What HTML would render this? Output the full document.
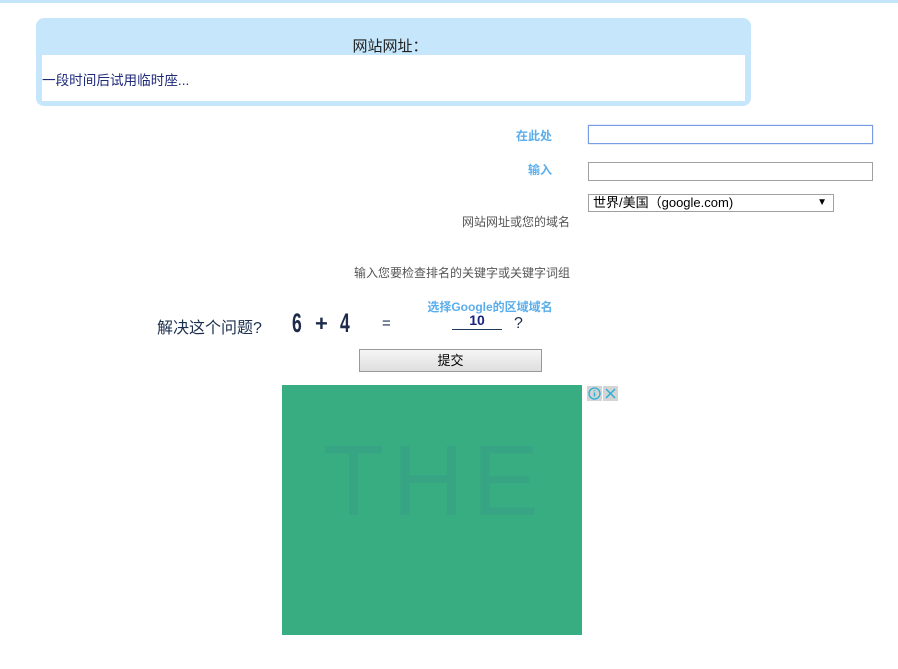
<!DOCTYPE html>
<html><head><meta charset="utf-8"><style>
body{margin:0;width:898px;height:669px;position:relative;background:#fff;font-family:"Liberation Sans","Noto Sans CJK SC",sans-serif;overflow:hidden}
.a{position:absolute;white-space:nowrap}
.lbl{color:#5aaeec;font-weight:bold;font-size:12px;text-align:right}
.hint{color:#555;font-size:12px;text-align:right}
</style></head><body>
<div class="a" style="left:0;top:0;width:898px;height:3px;background:#c5e5fb"></div>
<div class="a" style="left:36px;top:18px;width:715px;height:88px;background:#c5e6fb;border-radius:8px"></div>
<div class="a" style="left:42px;top:55px;width:703px;height:46px;background:#fff"></div>
<div class="a" style="left:0;width:780px;top:35px;text-align:center;font-size:15px;color:#222">网站网址：</div>
<div class="a" style="left:42px;top:69px;font-size:13.6px;color:#1f2a7a">一段时间后试用临时座...</div>

<div class="a lbl" style="right:346px;top:127px">在此处</div>
<div class="a" style="left:588px;top:125px;width:285px;height:19px;box-sizing:border-box;border:1px solid #7a9de6;box-shadow:0 0 1px #7a9de6"></div>
<div class="a lbl" style="right:346px;top:161px">输入</div>
<div class="a" style="left:588px;top:162px;width:285px;height:19px;box-sizing:border-box;border:1px solid #a0a0a0"></div>
<div class="a" style="left:588px;top:194px;width:246px;height:18px;box-sizing:border-box;border:1px solid #a0a0a0;font-size:13px;color:#000;line-height:16px;padding-left:4px">世界/美国（google.com)<span style="position:absolute;right:6px;top:0;font-size:10px">▼</span></div>
<div class="a hint" style="right:328px;top:213px">网站网址或您的域名</div>
<div class="a hint" style="right:328px;top:264px">输入您要检查排名的关键字或关键字词组</div>
<div class="a lbl" style="left:400px;width:180px;text-align:center;top:298px">选择Google的区域域名</div>

<div class="a" style="left:157px;top:314px;font-size:16px;color:#1d2f4f">解决这个问题?</div>
<div class="a" style="left:292px;top:308px;font-size:27px;font-weight:bold;color:#1d2a4a;transform:scaleX(0.65);transform-origin:left">6</div>
<div class="a" style="left:315px;top:311px;font-size:22px;font-weight:bold;color:#1d2a4a">+</div>
<div class="a" style="left:340px;top:308px;font-size:27px;font-weight:bold;color:#1d2a4a;transform:scaleX(0.65);transform-origin:left">4</div>
<div class="a" style="left:382px;top:315px;font-size:15px;color:#1d2f4f">=</div>
<div class="a" style="left:452px;top:312px;width:50px;text-align:center;font-size:14px;font-weight:bold;color:#1a237e">10</div>
<div class="a" style="left:452px;top:329px;width:50px;height:1px;background:#1d3a5a"></div>
<div class="a" style="left:514px;top:315px;font-size:16px;color:#1d2f4f">?</div>
<div class="a" style="left:359px;top:349px;width:183px;height:23px;box-sizing:border-box;border:1px solid #999;background:linear-gradient(#f6f6f6,#dedede);font-size:13px;text-align:center;line-height:21px;color:#000">提交</div>

<div class="a" style="left:282px;top:385px;width:300px;height:250px;background:#38ad82;overflow:hidden">
<div class="a" style="left:41px;top:31px;font-size:100px;line-height:130px;color:#37a584;font-family:'Liberation Sans',sans-serif;letter-spacing:8px">THE</div>
</div>
<div class="a" style="left:587px;top:386px;width:15px;height:15px;background:#d4d4d4"><svg width="15" height="15"><circle cx="7.5" cy="7.5" r="5.5" fill="none" stroke="#2ab0d8" stroke-width="1.3"/><path d="M7.5 6.5v4M7.5 4.3v1" stroke="#2ab0d8" stroke-width="1.5"/></svg></div>
<div class="a" style="left:603px;top:386px;width:15px;height:15px;background:#d4d4d4"><svg width="15" height="15"><path d="M3 3L12 12M12 3L3 12" stroke="#2ab0d8" stroke-width="1.5"/></svg></div>
</body></html>
